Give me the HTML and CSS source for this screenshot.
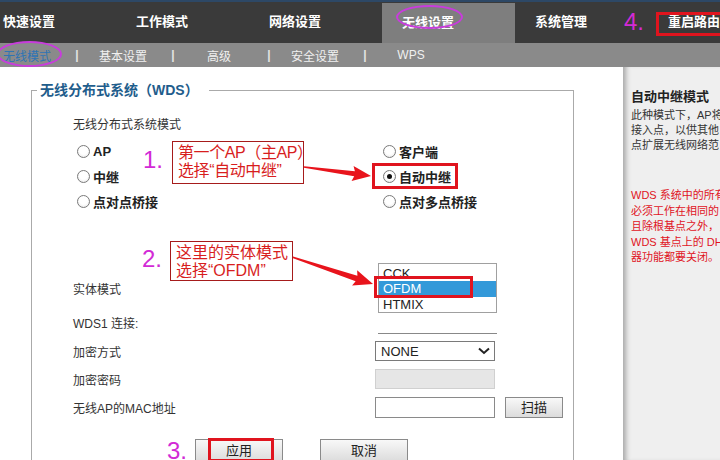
FILE: index.html
```html
<!DOCTYPE html>
<html lang="zh-CN">
<head>
    <meta charset="UTF-8">
    <title>无线设置 - WDS</title>
    <link rel="stylesheet" href="styles.css">
</head>
<body>
    <div class="topbar">
        <nav class="tabs">
            <span class="tab">快速设置</span>
            <span class="tab">工作模式</span>
            <span class="tab">网络设置</span>
            <span class="tab active">无线设置</span>
            <span class="tab">系统管理</span>
            <span class="tab">重启路由</span>
        </nav>
    </div>
    <div class="subbar">
        <span class="sub current">无线模式</span>
        <span class="sep">|</span>
        <span class="sub">基本设置</span>
        <span class="sep">|</span>
        <span class="sub">高级</span>
        <span class="sep">|</span>
        <span class="sub">安全设置</span>
        <span class="sep">|</span>
        <span class="sub">WPS</span>
    </div>

    <div class="page">
        <main class="content">
            <fieldset class="wds">
                <legend>无线分布式系统（WDS）</legend>
                <div class="wds-body">
                    <div class="mode-title">无线分布式系统模式</div>
                    <div class="radios">
                        <div class="radio"><span class="dot"></span>AP</div>
                        <div class="radio"><span class="dot"></span>客户端</div>
                        <div class="radio"><span class="dot"></span>中继</div>
                        <div class="radio"><span class="dot on"></span>自动中继</div>
                        <div class="radio"><span class="dot"></span>点对点桥接</div>
                        <div class="radio"><span class="dot"></span>点对多点桥接</div>
                    </div>

                    <div class="form">
                        <div class="row row-phy">
                            <span class="label">实体模式</span>
                            <div class="listbox">
                                <div class="opt">CCK</div>
                                <div class="opt sel">OFDM</div>
                                <div class="opt">HTMIX</div>
                            </div>
                        </div>
                        <div class="row row-link">
                            <span class="label up">WDS1 连接:</span>
                            <div class="rule"></div>
                        </div>
                        <div class="row row-std">
                            <span class="label">加密方式</span>
                            <div class="select">NONE
                                <svg width="12" height="8" viewBox="0 0 12 8"><path d="M1 1.5 L6 6 L11 1.5" fill="none" stroke="#222" stroke-width="2"/></svg>
                            </div>
                        </div>
                        <div class="row row-std">
                            <span class="label">加密密码</span>
                            <div class="input disabled"></div>
                        </div>
                        <div class="row row-std">
                            <span class="label">无线AP的MAC地址</span>
                            <div class="inline">
                                <div class="input"></div>
                                <span class="btn scan">扫描</span>
                            </div>
                        </div>
                    </div>

                    <div class="btns">
                        <span class="btn">应用</span>
                        <span class="btn">取消</span>
                    </div>
                </div>
            </fieldset>
        </main>

        <aside class="help">
            <div class="help-title">自动中继模式</div>
            <p class="help-text">此种模式下，AP将<br>接入点，以供其他<br>点扩展无线网络范</p>
            <p class="help-warn">WDS 系统中的所有<br>必须工作在相同的<br>且除根基点之外，<br>WDS 基点上的 DH<br>器功能都要关闭。</p>
        </aside>
    </div>

    <!-- annotations drawn over the screenshot -->
    <svg class="arrows" width="720" height="460" viewBox="0 0 720 460">
        <polygon transform="translate(304,167) rotate(7.65)" points="0,-0.8 51,-2.6 49,-7.5 67.6,0 49,7.5 51,2.6 0,0.8" fill="#e8141c"/>
        <polygon transform="translate(292,257) rotate(18.43)" points="0,-0.8 68,-2.8 66,-8 85.4,0 66,8 68,2.8 0,0.8" fill="#e8141c"/>
    </svg>
    <span class="num n1">1.</span>
    <span class="num n2">2.</span>
    <span class="num n3">3.</span>
    <span class="num n4">4.</span>
    <div class="note note1">第一个AP（主AP）<br>选择“自动中继”</div>
    <div class="note note2">这里的实体模式<br>选择“OFDM”</div>
    <div class="mark m-auto"></div>
    <div class="mark m-ofdm"></div>
    <div class="mark m-apply"></div>
    <div class="mark m-reboot"></div>
    <div class="ring r-tab"></div>
    <div class="ring r-sub"></div>
</body>
</html>
```

FILE: styles.css
```css
* {
    box-sizing: border-box;
}
body {
    margin: 0;
    width: 720px;
    height: 460px;
    overflow: hidden;
    position: relative;
    background: #fff;
    color: #333;
    font-family: "Liberation Sans", "Noto Sans CJK SC", sans-serif;
}
/* top navigation */
.topbar {
    height: 43px;
    background: #3a3a3a;
    border-top: 2px solid #2d4866;
    overflow: hidden;
}
.tabs {
    display: flex;
    height: 41px;
    margin-left: -17px;
}
.tab {
    flex: 0 0 133px;
    padding-left: 20px;
    line-height: 40px;
    color: #fff;
    font-size: 13px;
    font-weight: bold;
    white-space: nowrap;
}
.tab.active {
    background: #7e7e7e;
    margin-top: 1px;
    line-height: 39px;
}
.subbar {
    display: flex;
    align-items: center;
    height: 24px;
    margin-left: -9px;
    background: #8a8a8a;
    font-size: 12px;
    color: #f0f0f0;
}
.sub {
    flex: 0 0 72px;
    text-align: center;
}
.sub.current {
    color: #2f74b4;
}
.sep {
    flex: 0 0 24px;
    text-align: center;
    padding-left: 4px;
    color: #e4e4e4;
    font-weight: bold;
}
/* main area */
.page {
    display: flex;
    height: 393px;
    overflow: hidden;
}
.content {
    width: 623px;
    padding-top: 13px;
}
.wds {
    margin: 0 0 0 31px;
    width: 543px;
    height: 380px;
    min-width: 0;
    padding: 0 0 0 5px;
    border: 1px solid #aaa;
    border-bottom: 0;
}
.wds legend {
    padding: 0 10px 0 3px;
    line-height: 20px;
    font-size: 14px;
    font-weight: bold;
    color: #1f5d8c;
}
.wds-body {
    margin-left: 36px;
}
.mode-title {
    margin-top: 17px;
    font-size: 12px;
    line-height: 16px;
}
.radios {
    display: grid;
    grid-template-columns: 306px auto;
    grid-auto-rows: 25px;
    margin-top: 6px;
}
.radio {
    display: flex;
    align-items: center;
    gap: 3px;
    padding-left: 4px;
    font-size: 13px;
    font-weight: bold;
    color: #222;
}
.dot {
    position: relative;
    width: 13px;
    height: 13px;
    border: 1px solid #7a7a7a;
    border-radius: 50%;
    background: radial-gradient(circle at 50% 40%, #fff 45%, #e2e2e2);
}
.dot.on::after {
    content: "";
    position: absolute;
    left: 3px;
    top: 3px;
    width: 5px;
    height: 5px;
    border-radius: 50%;
    background: #111;
}
.form {
    margin-top: 49px;
}
.row {
    display: grid;
    grid-template-columns: 302px auto;
    align-items: center;
    font-size: 12px;
}
.row-phy {
    height: 50px;
}
.row-link {
    height: 22px;
}
.row-std {
    height: 24px;
    margin-top: 4px;
}
.label.up {
    padding-bottom: 4px;
}
.listbox {
    width: 119px;
    height: 50px;
    margin-left: 3px;
    padding-top: 2px;
    overflow: hidden;
    border: 1px solid #a0a0a0;
    font-size: 13px;
    line-height: 15px;
    color: #222;
}
.opt {
    padding-left: 4px;
}
.opt.sel {
    background: #3399d9;
    color: #fff;
    line-height: 16px;
}
.rule {
    align-self: end;
    width: 119px;
    margin: 0 0 1px 3px;
    border-bottom: 1px solid #888;
}
.select {
    display: flex;
    align-items: center;
    justify-content: space-between;
    width: 120px;
    height: 20px;
    padding: 0 4px 0 5px;
    border: 1px solid #7a7a7a;
    font-size: 13px;
    color: #222;
}
.input {
    width: 120px;
    height: 21px;
    border: 1px solid #8a8a8a;
    background: #fff;
}
.input.disabled {
    height: 20px;
    border-color: #d0d0d0;
    background: #e6e6e6;
}
.inline {
    display: flex;
    align-items: center;
    gap: 10px;
}
.btn {
    display: block;
    width: 88px;
    height: 23px;
    border: 1px solid #8a8a8a;
    background: linear-gradient(#f8f8f8, #dcdcdc);
    text-align: center;
    line-height: 21px;
    font-size: 13px;
    color: #222;
}
.btn.scan {
    width: 58px;
    height: 21px;
    line-height: 19px;
}
.btns {
    display: flex;
    gap: 37px;
    margin: 20px 0 0 122px;
}
/* help panel */
.help {
    flex: 1;
    overflow: hidden;
    white-space: nowrap;
    padding: 21px 0 0 8px;
    background: #efefef;
    box-shadow: inset 6px 0 5px -3px #a8a8a8;
    font-size: 11px;
    color: #333;
}
.help-title {
    line-height: 18px;
    font-size: 13px;
    font-weight: bold;
    color: #222;
}
.help-text {
    margin: 2px 0 0;
    line-height: 15px;
}
.help-warn {
    margin: 35px 0 0;
    line-height: 15.5px;
    color: #e0141e;
}
/* annotations */
.arrows {
    position: absolute;
    left: 0;
    top: 0;
    pointer-events: none;
}
.num {
    position: absolute;
    font-size: 24px;
    line-height: 24px;
    color: #d22ad6;
}
.n1 { left: 143px; top: 148px; }
.n2 { left: 142px; top: 247px; }
.n3 { left: 167px; top: 439px; }
.n4 { left: 624px; top: 10px; }
.note {
    position: absolute;
    padding: 2px 0 0 5px;
    border: 1px solid #a61b1b;
    background: #fff;
    white-space: nowrap;
    font-size: 16px;
    line-height: 18px;
    color: #d81e1e;
}
.note1 {
    left: 172px;
    top: 141px;
    width: 132px;
    height: 43px;
    letter-spacing: -0.4px;
}
.note2 {
    left: 170px;
    top: 241px;
    width: 123px;
    height: 40px;
}
.mark {
    position: absolute;
    border: 3px solid #e0141e;
}
.m-auto { left: 372px; top: 163px; width: 86px; height: 26px; }
.m-ofdm { left: 374px; top: 276px; width: 99px; height: 22px; }
.m-apply { left: 208px; top: 438px; width: 66px; height: 24px; }
.m-reboot { left: 656px; top: 12px; width: 70px; height: 24px; }
.ring {
    position: absolute;
    border: 2px solid #c83cdc;
    border-radius: 50%;
}
.r-tab { left: 396px; top: 5px; width: 67px; height: 24px; }
.r-sub { left: -3px; top: 41px; width: 65px; height: 26px; }
```
